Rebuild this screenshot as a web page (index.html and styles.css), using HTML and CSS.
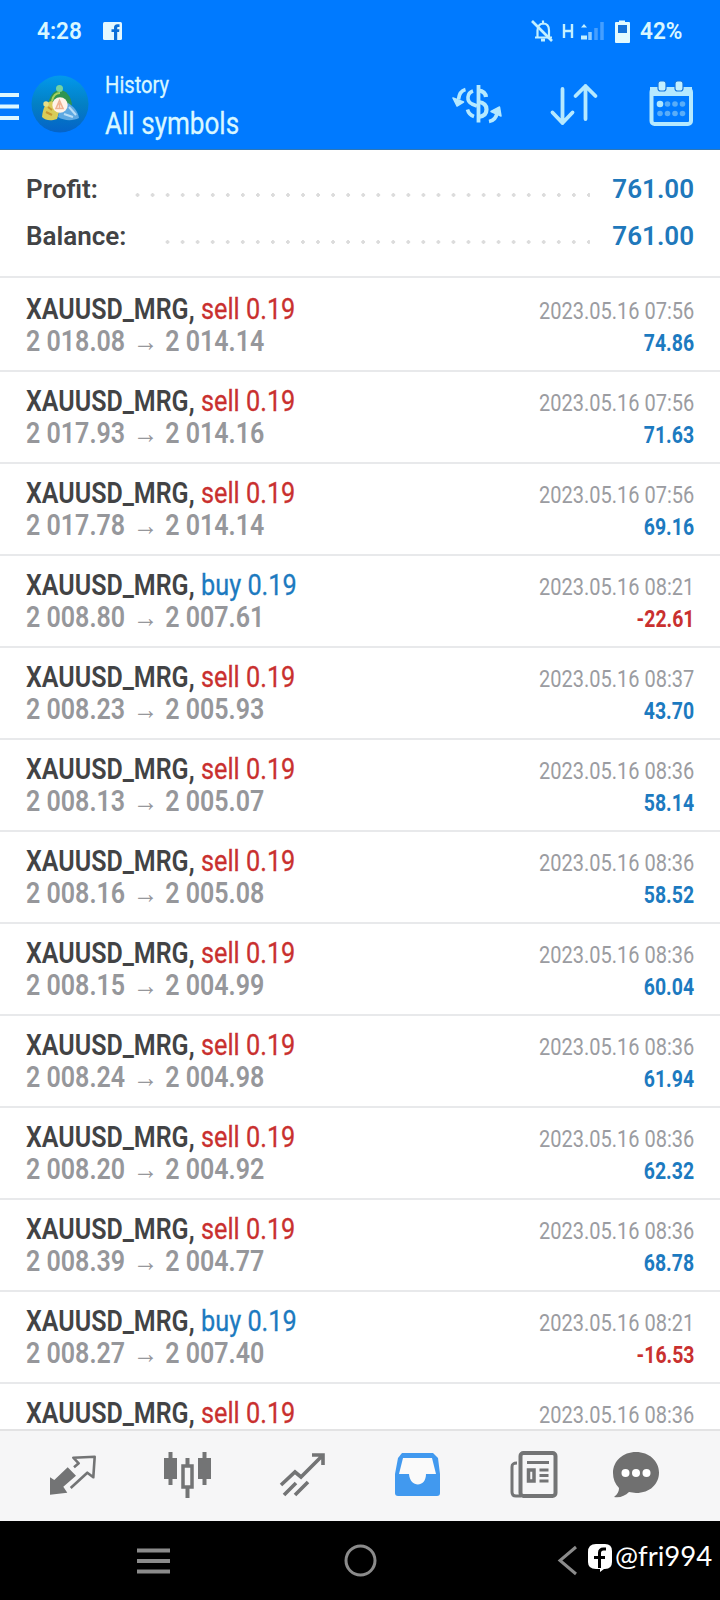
FILE: index.html
```html
<!DOCTYPE html>
<html lang="en">
<head>
<meta charset="utf-8">
<title>History</title>
<link rel="stylesheet" href="styles.css">
</head>
<body>
<header class="top">
  <div class="status">
    <span class="clock">4:28</span>
    <svg class="fb" width="19" height="18" viewBox="0 0 19 18"><rect width="19" height="18" rx="1.5" fill="#e4f8ff"/><path d="M11 18V10H8.500V7.200H11V5.600c0-2 1.100-3.400 3.400-3.400h2.100v2.700h-1.300c-.8 0-1 .4-1 1.100v1.200h2.200l-.3 2.800h-1.900v8z" fill="#0b6fd8"/></svg>
    <svg class="sys" width="100" height="26" viewBox="0 0 100 26" fill="none" stroke="#c3f0ff">
      <path d="M5 19.500h17M7.500 19v-6.500c0-4 2-6.500 5.500-7 4 0 6 3 6 7V19M13 5V2.500" stroke-width="2.200"/><path d="M2 3l20 20" stroke-width="2.600"/><path d="M11 22h4" stroke-width="3"/>
      <path d="M34 6v14M42 6v14M34 13h8" stroke-width="2.400"/>
      <path d="M51 9.500l3-3.500 3 3.500zM51 17.500h6v4h-6z" fill="#c3f0ff" stroke="none"/>
      <path d="M60 14v8" stroke-width="3.500" stroke="#8fccff"/><path d="M66 10v12M72 4v18" stroke-width="3.500" stroke="#459fff"/>
      <path d="M89 2.500h6V4h4q1 0 1 1v19q0 1-1 1H86q-1 0-1-1V5q0-1 1-1h3z" fill="#e2faff" stroke="none"/><path d="M88 7h9v8h-9z" fill="#1672d8" stroke="none"/>
    </svg>
    <span class="battery">42%</span>
  </div>
  <div class="bar">
    <svg width="19" height="28" viewBox="0 0 19 28" fill="#dcf7ff"><path d="M0 0h19v4H0zM0 11.500h19v4H0zM0 23h19v4H0z"/></svg>
    <svg class="logo" width="58" height="60" viewBox="0 0 58 60">
      <defs><linearGradient id="g" x1="0" y1="0" x2="0" y2="1"><stop offset="0" stop-color="#0299ec"/><stop offset=".5" stop-color="#0380c4"/><stop offset="1" stop-color="#0563c8"/></linearGradient></defs>
      <circle cx="29" cy="30" r="28.500" fill="url(#g)"/>
      <path d="M17 31c1-8 5-14 11-15 7 0 12 6 13 15l-9 2z" fill="#2f9450"/><path d="M21 27c1-5 4-8 8-8" fill="none" stroke="#a8d25e" stroke-width="2"/><circle cx="28.500" cy="14.500" r="3.500" fill="#75d2a0"/>
      <path d="M11 43c1-10 4-15 10-16l8 8-3 10c-6 2-11 2-15-2z" fill="#d9cc58"/><circle cx="15" cy="30" r="2.700" fill="#e7de86"/>
      <path d="M48 44c-6 3-15 3-21-1l2-8 8-6c5 3 10 8 11 15z" fill="#5fa9e2"/><path d="M38 33l7 8M33 40l9 3" stroke="#b9def7" stroke-width="2"/>
      <circle cx="29" cy="31" r="7.700" fill="#fff3e8"/><path d="M28.500 26.500l3.500 8h-7zM28.500 29v5" fill="none" stroke="#efb293" stroke-width="1.600"/>
      <path d="M15 38l6 3m-4-8l4 3" stroke="#c69530" stroke-width="2"/>
    </svg>
    <div class="heads"><span class="h-small">History</span><span class="h-big">All symbols</span></div>
    <svg class="acts" width="244" height="50" viewBox="0 0 244 50" fill="none" stroke="#b5e9ff">
      <path d="M13.500 9.500c-4 1-6.500 5-7 10" stroke-width="3.600"/><path d="M1 18l10.500 4-6.500 4z" fill="#b5e9ff" stroke-width="1.500" stroke-linejoin="round"/>
      <path d="M26.500 5v37.500" stroke-width="3.800"/><path d="M34 17c-.5-4-3-6-7.500-6.500M26.500 22c5 .5 8 3 8 7.500s-3 7-8 7.500" stroke-width="4.200"/><path d="M21 11c-6 2-7 10-1 13l5 2M22 36.500c-3-1-5.500-3-6.500-7" stroke-width="3.600"/>
      <path d="M37 41.500c5-1 7.500-4 8-9" stroke-width="3.600"/><path d="M39 31.500l8.500-4.500 1.500 9z" fill="#b5e9ff" stroke-width="1.500" stroke-linejoin="round"/>
      <path d="M110.500 9v34M100.500 32.500l10 10.500 10-10.500M133.500 39V6M123.500 16L133.500 6l10 10" stroke-width="3.800" stroke-linecap="round" stroke-linejoin="round"/>
      <rect x="199.500" y="9" width="39.500" height="35" rx="3" stroke-width="4"/><path d="M198 7h42v9h-42z" fill="#b5e9ff" stroke="none"/>
      <rect x="206" y="1" width="8" height="10" rx="2.500" fill="#c4f0ff" stroke="#1677df" stroke-width="1.200"/><rect x="223" y="1" width="8" height="10" rx="2.500" fill="#c4f0ff" stroke="#1677df" stroke-width="1.200"/>
      <g stroke="none" fill="#59adf8"><circle cx="208" cy="24" r="3.300" fill="#b0e7ff"/><circle cx="215.500" cy="24" r="2.800"/><circle cx="223" cy="24" r="2.800"/><circle cx="230.500" cy="24" r="2.800"/><circle cx="208" cy="33.500" r="2.800"/><circle cx="215.500" cy="33.500" r="2.800"/><circle cx="223" cy="33.500" r="2.800"/><circle cx="230.500" cy="33.500" r="2.800"/></g>
    </svg>
  </div>
</header>
<section class="summary">
  <div class="sum"><span>Profit:</span><i class="dots d1"></i><b>761.00</b></div>
  <div class="sum"><span>Balance:</span><i class="dots d2"></i><b>761.00</b></div>
</section>
<main class="list" id="list"></main>
<nav class="tabs">
  <svg width="720" height="70" viewBox="0 0 720 70" fill="none" stroke="#737475">
    <path d="M50 36.300l4.300 2.700 13.400-12.700 8.300 8.400-12.700 11 4 6L50 53.700z" fill="#737475" stroke="none"/>
    <path d="M74 26.300l4.700-4-5.400-5.600 21.400-1-1.400 20.600-6-4.600L70.700 47" stroke-width="2.600" stroke-linejoin="round"/>
    <path d="M170.500 11v33M204.500 11v33M187.500 17v8M187.500 47v10" stroke-width="4"/><path d="M164 17h13v21h-13zM198 17h13v21h-13z" fill="#737475" stroke="none"/><rect x="183" y="25" width="9" height="21" stroke-width="3.500"/>
    <path d="M281 44l14-13 6 5 22-22M312 14h11v10M284 54l12-12M295 54l13-13" stroke-width="3.600"/>
    <path d="M402 12h31l5 5 2 16v19q0 3-3 3h-39q-3 0-3-3V33l3-16z" fill="#4199ef" stroke="none"/><path d="M403 17h29l4 16h-10c0 14-16 14-17 0h-10z" fill="#fafafa" stroke="none"/>
    <rect x="520.500" y="12" width="35" height="43" rx="3" stroke-width="4"/><path d="M517 22c-4 0-5 1-5 4v25q0 4 4 4h5M527 21.500h22M539.500 29h9M539.500 34.500h9M539.500 40h9" stroke-width="3"/><rect x="528.500" y="29" width="5.500" height="11" stroke-width="3.500"/>
    <path d="M636 11c13 0 23 9 23 20.500S650 52 636 52l-7-1c-4 4-9 6-15 5 4-3 5-6 5-9-4-4-6-9-6-15C613 20 623 11 636 11z" fill="#707070" stroke="none"/><g fill="#fff" stroke="none"><circle cx="625.500" cy="32" r="4"/><circle cx="636" cy="32" r="4"/><circle cx="646.500" cy="32" r="4"/></g>
  </svg>
</nav>
<footer class="sysnav">
  <svg width="592" height="79" viewBox="0 0 592 79" fill="none" stroke="#8b8b8b" stroke-width="3.800">
    <path d="M137 29.500h33M137 40h33M137 50.500h33"/><circle cx="360.500" cy="39.500" r="14.500" stroke-width="3"/><path d="M576 26l-16 13.500L576 53" stroke-width="3"/>
  </svg>
  <svg class="mark" width="25" height="29" viewBox="0 0 25 29"><path d="M8 0h9q7 0 7 7v11q0 7-7 7h-1l-4 3v-3H8q-8 0-8-7V8q0-8 8-8z" fill="#fff"/><path d="M11.500 24V9q0-4 4-4H18M6 13.500h11" fill="none" stroke="#000" stroke-width="3"/></svg>
  <span class="handle">@fri994</span>
</footer>
<script src="app.js"></script>
</body>
</html>
```
FILE: styles.css
```css
* { box-sizing: border-box; }
body { margin: 0; width: 720px; height: 1600px; overflow: hidden; display: flex; flex-direction: column; background: #fff; font-family: Roboto, "Liberation Sans", sans-serif; color: #424345; }
svg { display: block; flex: none; }
.top { height: 150px; flex: none; background: #007aff; color: #d9f7ff; border-bottom: 1px solid #2d77b8; }
.status { height: 61px; padding: 0 0 0 37px; display: flex; align-items: center; }
.clock, .battery { font-size: 24px; font-weight: 600; line-height: 28px; width: 46px; white-space: nowrap; transform: scaleX(.94); transform-origin: 0 50%; }
.fb { margin-left: 20px; }
.sys { margin-left: 408px; }
.battery { margin-left: 10px; }
.bar { display: flex; height: 89px; align-items: flex-start; }
.bar > svg:first-child { margin-top: 32px; }
.logo { margin: 13px 0 0 12px; }
.heads { margin-left: 16px; width: 347px; padding-top: 9px; display: flex; flex-direction: column; align-items: flex-start; }
.h-small, .h-big { transform-origin: 0 50%; white-space: nowrap; -webkit-text-stroke: .3px currentColor; }
.h-small { font-size: 24px; line-height: 30px; transform: scaleX(.84); }
.h-big { font-size: 32px; line-height: 46px; transform: scaleX(.815); }
.acts { margin-top: 19px; }
.summary { height: 128px; flex: none; padding: 16px 26px 0; border-bottom: 2px solid #e8e9eb; }
.sum { height: 47px; display: flex; align-items: flex-start; justify-content: space-between; font-size: 26px; line-height: 47px; font-weight: 600; }
.sum b { width: 84px; text-align: right; font-weight: 600; color: #2078bb; }
.dots { height: 4px; margin-top: 27px; margin-left: auto; margin-right: 20px; background: radial-gradient(circle 2px, #dcdcdc 80%, transparent) 0 0 / 15.05px 4px; }
.d1 { width: 460px; }
.d2 { width: 430px; }
.list { flex: 1; min-height: 0; overflow: hidden; padding-top: 2px; }
.row { height: 92px; padding: 13px 26px 0; border-bottom: 2px solid #e8e9eb; display: flex; justify-content: space-between; white-space: nowrap; }
.deal, .meta { display: flex; flex-direction: column; line-height: 32px; }
.deal { font-size: 29px; align-items: flex-start; }
.meta { font-size: 24px; padding-top: 2px; align-items: flex-end; }
.name, .side, .price, .date, .profit { display: inline-block; transform-origin: 0 50%; }
.title { display: flex; }
.name { width: 175px; font-weight: 600; transform: scaleX(.862); }
.side { transform: scaleX(.872); -webkit-text-stroke: .3px currentColor; }
.price { font-weight: 600; color: #96979b; transform: scaleX(.863); }
.arrow { margin: 0 1px 0 2px; }
.date, .profit { transform-origin: 100% 50%; }
.date { color: #9b9ca1; transform: scaleX(.833); }
.profit { font-weight: 700; transform: scaleX(.81); }
.sell, .neg { color: #c9302f; }
.buy, .pos { color: #1c7ac0; }
.tabs { height: 92px; flex: none; padding-top: 10px; background: #f6f6f7; border-top: 2px solid #e3e3e4; }
.sysnav { height: 79px; flex: none; background: #000; color: #fff; display: flex; }
.mark { margin-top: 23px; margin-left: -4px; }
.handle { font-family: Lato, sans-serif; font-size: 27px; line-height: 34px; margin: 18px 0 0 2px; white-space: nowrap; transform: scaleX(1.02); transform-origin: 0 50%; }
```
FILE: app.js
```js
const deals = [
  ["sell", "2 018.08", "2 014.14", "07:56", "74.86"],
  ["sell", "2 017.93", "2 014.16", "07:56", "71.63"],
  ["sell", "2 017.78", "2 014.14", "07:56", "69.16"],
  ["buy", "2 008.80", "2 007.61", "08:21", "-22.61"],
  ["sell", "2 008.23", "2 005.93", "08:37", "43.70"],
  ["sell", "2 008.13", "2 005.07", "08:36", "58.14"],
  ["sell", "2 008.16", "2 005.08", "08:36", "58.52"],
  ["sell", "2 008.15", "2 004.99", "08:36", "60.04"],
  ["sell", "2 008.24", "2 004.98", "08:36", "61.94"],
  ["sell", "2 008.20", "2 004.92", "08:36", "62.32"],
  ["sell", "2 008.39", "2 004.77", "08:36", "68.78"],
  ["buy", "2 008.27", "2 007.40", "08:21", "-16.53"],
  ["sell", "", "", "08:36", ""]
];
document.getElementById("list").innerHTML = deals.map(([side, open, close, time, profit]) => `
  <div class="row">
    <div class="deal">
      <div class="title"><span class="name">XAUUSD_MRG,</span><span class="side ${side}">${side} 0.19</span></div>
      ${open ? `<span class="price">${open} <span class="arrow">→</span> ${close}</span>` : ""}
    </div>
    <div class="meta">
      <span class="date">2023.05.16 ${time}</span>
      ${profit ? `<span class="profit ${profit[0] === "-" ? "neg" : "pos"}">${profit}</span>` : ""}
    </div>
  </div>`).join("");
```
